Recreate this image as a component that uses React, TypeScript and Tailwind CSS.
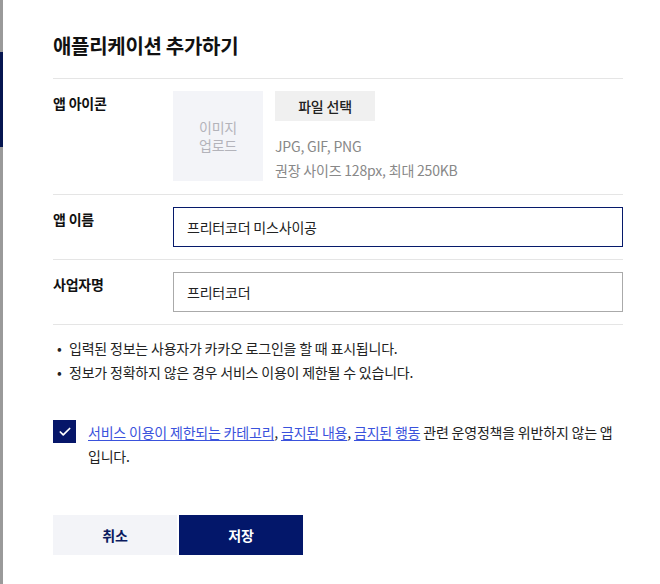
import { useState } from 'react';
import { Check } from 'lucide-react';

const font = { fontFamily: '"Noto Sans CJK KR", "Noto Sans", sans-serif' };

function Row({ label, children, last }: { label: string; children: React.ReactNode; last?: boolean }) {
  return (
    <div className={`flex py-3 border-t border-[#e5e5e5] ${last ? 'border-b' : ''}`}>
      <div className="w-[120px] shrink-0 text-[14px] leading-6 font-bold text-[#111]">{label}</div>
      <div className="flex-1">{children}</div>
    </div>
  );
}

export default function App() {
  const [appName, setAppName] = useState('프리터코더 미스사이공');
  const [company, setCompany] = useState('프리터코더');
  const [agreed, setAgreed] = useState(true);

  return (
    <div className="flex min-h-[584px] bg-white tracking-[-0.2px]" style={font}>
      {/* backdrop peeking out from behind the dialog */}
      <div className="w-[3px] shrink-0 bg-[#9a9a9a] flex flex-col">
        <div className="h-[52px]" />
        <div className="h-[95px] bg-[#061650]" />
      </div>

      <div className="w-[570px] ml-[50px] pt-[31px]">
        <h2 className="text-[20px] leading-[30px] font-bold text-[#111] mb-[17px] tracking-[-0.3px]">애플리케이션 추가하기</h2>

        <Row label="앱 아이콘">
          <div className="flex gap-3">
            <div className="w-[90px] h-[90px] bg-[#f3f4f8] flex items-center justify-center text-center text-[14px] leading-[18px] text-[#b3b3ba]">
              이미지
              <br />
              업로드
            </div>
            <div>
              <button className="w-[100px] h-[30px] bg-[#f0f0f0] text-[14px] font-medium text-[#222]">파일 선택</button>
              <div className="mt-[13px] text-[14px] leading-6 text-[#888]">
                <p>JPG, GIF, PNG</p>
                <p>권장 사이즈 128px, 최대 250KB</p>
              </div>
            </div>
          </div>
        </Row>

        <Row label="앱 이름">
          <input
            value={appName}
            onChange={e => setAppName(e.target.value)}
            className="w-full h-10 border border-[#061a6b] px-[13px] text-[14px] text-[#222] outline-none tracking-[-0.2px]"
            style={font}
          />
        </Row>

        <Row label="사업자명" last>
          <input
            value={company}
            onChange={e => setCompany(e.target.value)}
            className="w-full h-10 border border-[#aaaaaa] px-[13px] text-[14px] text-[#222] outline-none tracking-[-0.2px]"
            style={font}
          />
        </Row>

        <ul className="pt-[11px] text-[14px] leading-6 text-[#222]">
          <li className="flex">
            <span className="w-4 pl-1">•</span>입력된 정보는 사용자가 카카오 로그인을 할 때 표시됩니다.
          </li>
          <li className="flex">
            <span className="w-4 pl-1">•</span>정보가 정확하지 않은 경우 서비스 이용이 제한될 수 있습니다.
          </li>
        </ul>

        <div className="flex mt-[36px]">
          <button
            onClick={() => setAgreed(!agreed)}
            className={`w-[23px] h-[23px] shrink-0 flex items-center justify-center ${agreed ? 'bg-[#061669]' : 'border border-[#aaa] bg-white'}`}
          >
            {agreed && <Check className="w-[14px] h-[14px] text-white" strokeWidth={3} />}
          </button>
          <p className="ml-3 text-[14px] leading-6 text-[#222]">
            <a className="text-[#3a52dc] underline underline-offset-2">서비스 이용이 제한되는 카테고리</a>,{' '}
            <a className="text-[#3a52dc] underline underline-offset-2">금지된 내용</a>,{' '}
            <a className="text-[#3a52dc] underline underline-offset-2">금지된 행동</a> 관련 운영정책을 위반하지 않는 앱
            입니다.
          </p>
        </div>

        <div className="flex gap-[2px] mt-[47px]">
          <button className="w-[124px] h-10 bg-[#f3f4f8] text-[14px] font-bold text-[#0a1a5e]">취소</button>
          <button className="w-[124px] h-10 bg-[#03176a] text-[14px] font-bold text-white">저장</button>
        </div>
      </div>
    </div>
  );
}
